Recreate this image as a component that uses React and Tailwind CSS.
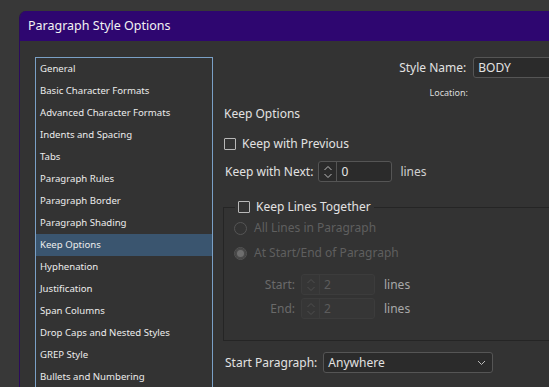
import React from 'react';

const sections = [
  'General',
  'Basic Character Formats',
  'Advanced Character Formats',
  'Indents and Spacing',
  'Tabs',
  'Paragraph Rules',
  'Paragraph Border',
  'Paragraph Shading',
  'Keep Options',
  'Hyphenation',
  'Justification',
  'Span Columns',
  'Drop Caps and Nested Styles',
  'GREP Style',
  'Bullets and Numbering',
];

const font = { fontFamily: '"Noto Sans", "Open Sans", sans-serif' };

function Checkbox() {
  return <span className="inline-block w-[12px] h-[12px] border border-[#b8b8b8] rounded-[1px] shrink-0" />;
}

function Radio({ checked }) {
  return (
    <span className="w-[13px] h-[13px] rounded-full border border-[#555] flex items-center justify-center shrink-0">
      {checked && <span className="w-[7px] h-[7px] rounded-full bg-[#6e6e6e] ring-2 ring-[#4a4a4a]" />}
    </span>
  );
}

function Arrows({ color }) {
  return (
    <svg width="10" height="16" viewBox="0 0 10 16" fill="none" stroke={color} strokeWidth="1">
      <path d="M1.5 6 L5 2.5 L8.5 6" />
      <path d="M1.5 10 L5 13.5 L8.5 10" />
    </svg>
  );
}

function Spinner({ value, disabled, className }) {
  return (
    <div
      className={`flex h-[21px] w-[74px] rounded-[3px] border ${
        disabled ? 'border-[#3c3c3c] bg-[#363636]' : 'border-[#555] bg-[#2b2b2b]'
      } ${className || ''}`}
    >
      <div className={`w-[18px] flex items-center justify-center border-r ${disabled ? 'border-[#3c3c3c]' : 'border-[#555]'}`}>
        <Arrows color={disabled ? '#4e4e4e' : '#bbb'} />
      </div>
      <div className={`pl-[4px] text-[12px] leading-[19px] ${disabled ? 'text-[#5c5c5c]' : 'text-[#e6e6e6]'}`}>{value}</div>
    </div>
  );
}

export default function App() {
  return (
    <div className="w-[549px] h-[387px] overflow-hidden bg-[#383838] pt-[11px] pl-[19px]" style={font}>
      <div className="w-[600px] h-[400px] rounded-tl-[7px] overflow-hidden bg-[#333333] border-l border-[#2a0b5c]">
        {/* title bar */}
        <div className="h-[30px] bg-[#2e0670] flex items-center pl-[8px] pt-[1px] text-[12.5px] text-[#f2f2f2]">
          Paragraph Style Options
        </div>

        <div className="flex pt-[16px] pl-[15px]">
          {/* section list */}
          <div className="w-[178px] h-[360px] border border-[#7aa0c6] shrink-0">
            {sections.map((s) => (
              <div
                key={s}
                className={`h-[22px] flex items-center pl-[4px] text-[9.6px] text-[#ececec] ${
                  s === 'Keep Options' ? 'bg-[#3a556f]' : ''
                }`}
              >
                {s}
              </div>
            ))}
          </div>

          {/* options */}
          <div className="ml-[10px] w-[340px] flex flex-col text-[12px] text-[#e2e2e2]">
            <div className="h-[21px] flex items-center">
              <div className="w-[244px] text-right">Style Name:</div>
              <div className="ml-[7px] w-[90px] h-[21px] rounded-[3px] border border-[#555] bg-[#2b2b2b] pl-[4px] leading-[19px]">
                BODY
              </div>
            </div>
            <div className="mt-[8px] h-[14px] flex items-center">
              <div className="w-[245px] text-right text-[9px] text-[#dcdcdc]">Location:</div>
            </div>
            <div className="mt-[6px] h-[16px] flex items-center pl-[1px] text-[12px]">Keep Options</div>

            <div className="mt-[14px] h-[16px] flex items-center pl-[1px] gap-[6px]">
              <Checkbox />
              <span>Keep with Previous</span>
            </div>

            <div className="mt-[9px] h-[21px] flex items-center pl-[2px]">
              <span>Keep with Next:</span>
              <Spinner value="0" className="ml-[5px]" />
              <span className="ml-[8px] text-[#d0d0d0]">lines</span>
            </div>

            <fieldset className="mt-[18px] w-[340px] h-[141px] border border-[#252525] px-[10px]">
              <legend className="ml-[1px] px-[3px] h-[14px] flex items-center gap-[6px]">
                <Checkbox />
                <span>Keep Lines Together</span>
              </legend>
              <div className="mt-[7px] h-[14px] flex items-center gap-[7px] text-[#5f5f5f]">
                <Radio />
                <span>All Lines in Paragraph</span>
              </div>
              <div className="mt-[11px] h-[14px] flex items-center gap-[7px] text-[#5f5f5f]">
                <Radio checked />
                <span>At Start/End of Paragraph</span>
              </div>
              <div className="mt-[14px] h-[21px] flex items-center">
                <span className="w-[61px] text-right text-[#6a6a6a]">Start:</span>
                <Spinner value="2" disabled className="ml-[6px]" />
                <span className="ml-[9px] text-[#a8a8a8]">lines</span>
              </div>
              <div className="mt-[3px] h-[21px] flex items-center">
                <span className="w-[61px] text-right text-[#6a6a6a]">End:</span>
                <Spinner value="2" disabled className="ml-[6px]" />
                <span className="ml-[9px] text-[#a8a8a8]">lines</span>
              </div>
            </fieldset>

            <div className="mt-[11px] h-[21px] flex items-center pl-[2px]">
              <span>Start Paragraph:</span>
              <div className="ml-[6px] w-[170px] h-[21px] rounded-[3px] border border-[#555] bg-[#2b2b2b] flex items-center justify-between pl-[4px] pr-[6px]">
                <span>Anywhere</span>
                <svg width="9" height="6" viewBox="0 0 9 6" fill="none" stroke="#bbb" strokeWidth="1">
                  <path d="M1 1 L4.5 4.5 L8 1" />
                </svg>
              </div>
            </div>
          </div>
        </div>
      </div>
    </div>
  );
}
